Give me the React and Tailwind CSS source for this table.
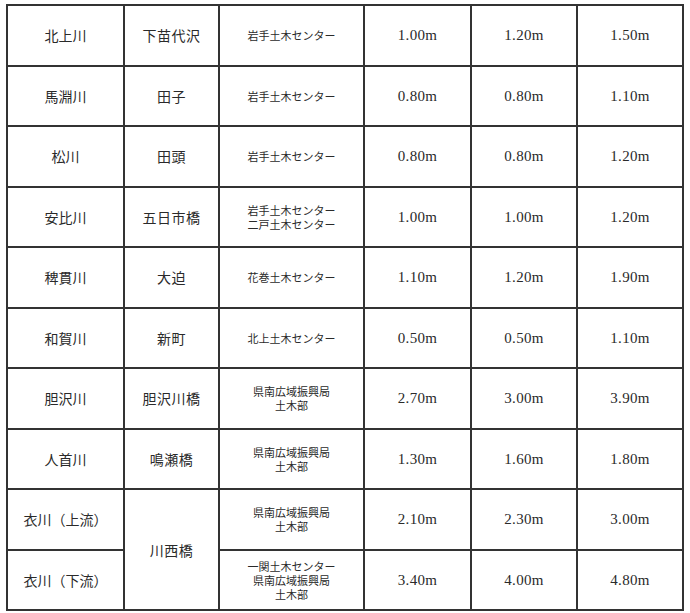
import React from "react";

const rows = [
  ["北上川", "下苗代沢", ["岩手土木センター"], "1.00m", "1.20m", "1.50m"],
  ["馬淵川", "田子", ["岩手土木センター"], "0.80m", "0.80m", "1.10m"],
  ["松川", "田頭", ["岩手土木センター"], "0.80m", "0.80m", "1.20m"],
  ["安比川", "五日市橋", ["岩手土木センター", "二戸土木センター"], "1.00m", "1.00m", "1.20m"],
  ["稗貫川", "大迫", ["花巻土木センター"], "1.10m", "1.20m", "1.90m"],
  ["和賀川", "新町", ["北上土木センター"], "0.50m", "0.50m", "1.10m"],
  ["胆沢川", "胆沢川橋", ["県南広域振興局", "土木部"], "2.70m", "3.00m", "3.90m"],
  ["人首川", "鳴瀬橋", ["県南広域振興局", "土木部"], "1.30m", "1.60m", "1.80m"],
  ["衣川（上流）", "川西橋", ["県南広域振興局", "土木部"], "2.10m", "2.30m", "3.00m"],
  ["衣川（下流）", null, ["一関土木センター", "県南広域振興局", "土木部"], "3.40m", "4.00m", "4.80m"],
];

const jp = { fontFamily: '"Noto Sans CJK JP", "Noto Sans", sans-serif' };
const num = { fontFamily: '"Liberation Serif", "DejaVu Serif", serif' };

export default function App() {
  return (
    <div className="bg-white w-[690px] h-[613px] pl-[6px] pt-[4px] text-[#2a2a2a]">
      <table className="border-collapse table-fixed w-[678px]">
        <colgroup>
          <col className="w-[117px]" />
          <col className="w-[95px]" />
          <col className="w-[145px]" />
          <col className="w-[107px]" />
          <col className="w-[106px]" />
          <col className="w-[106px]" />
        </colgroup>
        <tbody>
          {rows.map((r, i) => (
            <tr key={i} className="h-[60.5px]">
              <td className="border-2 border-[#333] text-center align-middle text-[14px] leading-[20px]" style={jp}>
                {r[0]}
              </td>
              {r[1] !== null && (
                <td
                  rowSpan={i === 8 ? 2 : 1}
                  className="border-2 border-[#333] text-center align-middle text-[14px] leading-[20px] tracking-[0.5px]"
                  style={jp}
                >
                  {r[1]}
                </td>
              )}
              <td className="border-2 border-[#333] text-center align-middle text-[11px] leading-[14px]" style={jp}>
                {r[2].map((l, j) => (
                  <div key={j} className="leading-[14px]">{l}</div>
                ))}
              </td>
              {[r[3], r[4], r[5]].map((v, j) => (
                <td key={j} className="border-2 border-[#333] text-center align-middle text-[15px] tracking-[0.3px]" style={num}>
                  {v}
                </td>
              ))}
            </tr>
          ))}
        </tbody>
      </table>
    </div>
  );
}
